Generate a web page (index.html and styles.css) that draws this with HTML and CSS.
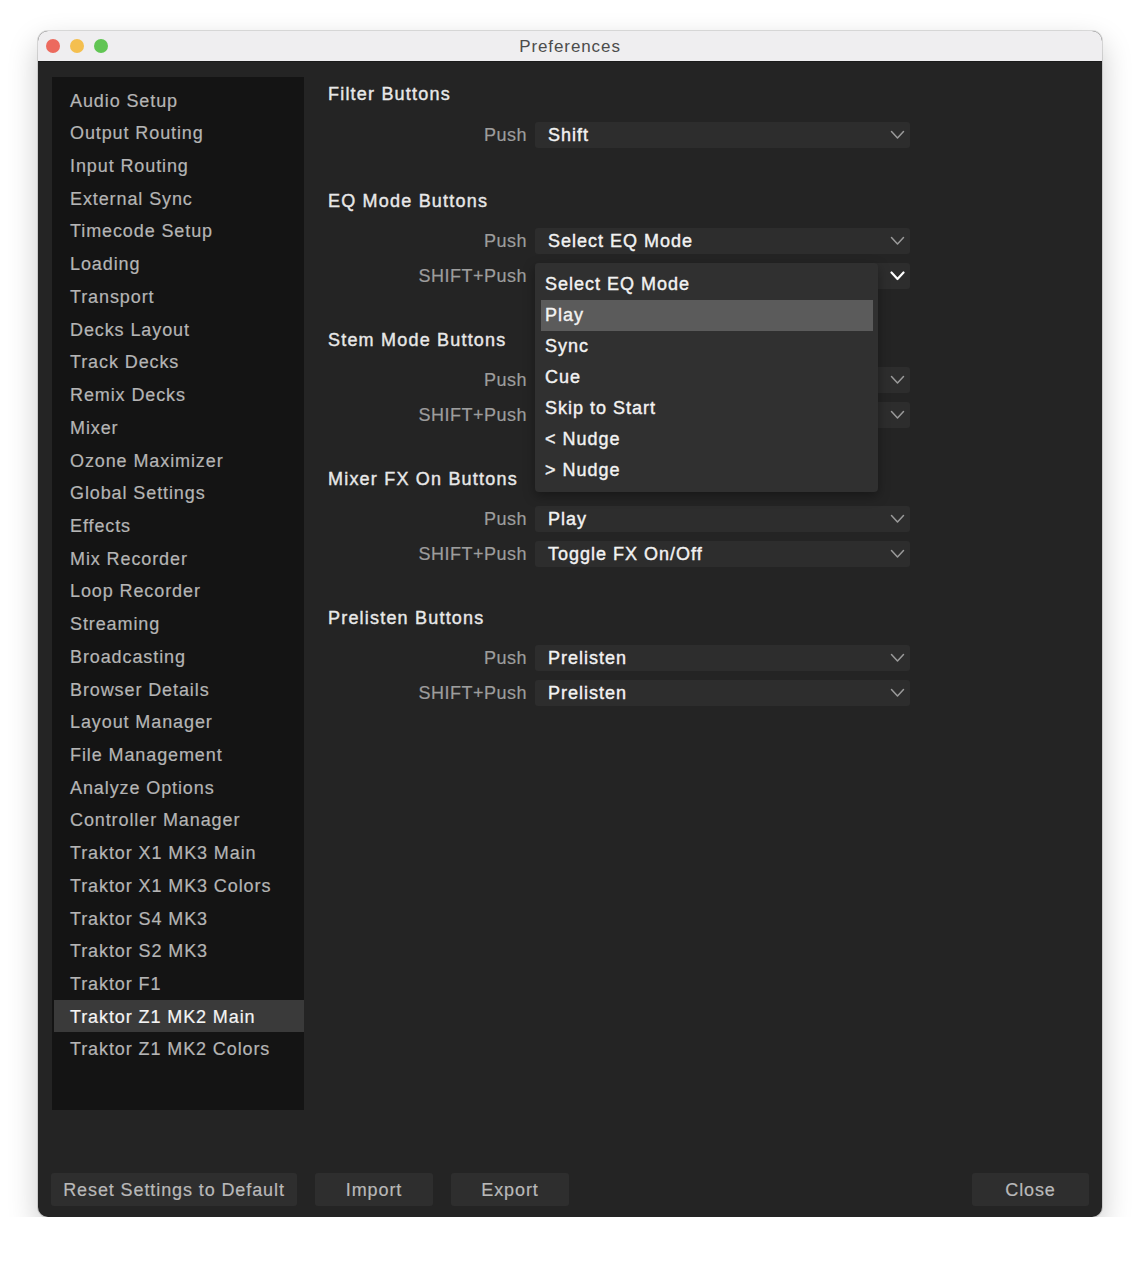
FILE: index.html
```html
<!DOCTYPE html>
<html lang="en">
<head>
<meta charset="utf-8">
<title>Preferences</title>
<link rel="stylesheet" href="styles.css">
</head>
<body>
<div class="window">
  <div class="titlebar">
    <div class="lights">
      <span class="light red"></span>
      <span class="light yellow"></span>
      <span class="light green"></span>
    </div>
    <div class="title">Preferences</div>
  </div>
  <div class="window-body">
    <div class="main">
      <nav class="sidebar">
        <div class="nav-item">Audio Setup</div>
        <div class="nav-item">Output Routing</div>
        <div class="nav-item">Input Routing</div>
        <div class="nav-item">External Sync</div>
        <div class="nav-item">Timecode Setup</div>
        <div class="nav-item">Loading</div>
        <div class="nav-item">Transport</div>
        <div class="nav-item">Decks Layout</div>
        <div class="nav-item">Track Decks</div>
        <div class="nav-item">Remix Decks</div>
        <div class="nav-item">Mixer</div>
        <div class="nav-item">Ozone Maximizer</div>
        <div class="nav-item">Global Settings</div>
        <div class="nav-item">Effects</div>
        <div class="nav-item">Mix Recorder</div>
        <div class="nav-item">Loop Recorder</div>
        <div class="nav-item">Streaming</div>
        <div class="nav-item">Broadcasting</div>
        <div class="nav-item">Browser Details</div>
        <div class="nav-item">Layout Manager</div>
        <div class="nav-item">File Management</div>
        <div class="nav-item">Analyze Options</div>
        <div class="nav-item">Controller Manager</div>
        <div class="nav-item">Traktor X1 MK3 Main</div>
        <div class="nav-item">Traktor X1 MK3 Colors</div>
        <div class="nav-item">Traktor S4 MK3</div>
        <div class="nav-item">Traktor S2 MK3</div>
        <div class="nav-item">Traktor F1</div>
        <div class="nav-item selected">Traktor Z1 MK2 Main</div>
        <div class="nav-item">Traktor Z1 MK2 Colors</div>
      </nav>

      <div class="content">
        <section class="group">
          <h2 class="group-title">Filter Buttons</h2>
          <div class="rows">
            <div class="row">
              <span class="label">Push</span>
              <div class="select"><span class="value">Shift</span><svg class="chev" viewBox="0 0 15 10" width="15" height="10"><polyline points="1.5,1.5 7.5,8 13.5,1.5"/></svg></div>
            </div>
          </div>
        </section>

        <section class="group">
          <h2 class="group-title">EQ Mode Buttons</h2>
          <div class="rows">
            <div class="row">
              <span class="label">Push</span>
              <div class="select"><span class="value">Select EQ Mode</span><svg class="chev" viewBox="0 0 15 10" width="15" height="10"><polyline points="1.5,1.5 7.5,8 13.5,1.5"/></svg></div>
            </div>
            <div class="row">
              <span class="label">SHIFT+Push</span>
              <div class="select open">
                <span class="value"></span><svg class="chev" viewBox="0 0 15 10" width="15" height="10"><polyline points="1.5,1.5 7.5,8 13.5,1.5"/></svg>
                <ul class="menu">
                  <li class="menu-item">Select EQ Mode</li>
                  <li class="menu-item active">Play</li>
                  <li class="menu-item">Sync</li>
                  <li class="menu-item">Cue</li>
                  <li class="menu-item">Skip to Start</li>
                  <li class="menu-item">&lt; Nudge</li>
                  <li class="menu-item">&gt; Nudge</li>
                </ul>
              </div>
            </div>
          </div>
        </section>

        <section class="group">
          <h2 class="group-title">Stem Mode Buttons</h2>
          <div class="rows">
            <div class="row">
              <span class="label">Push</span>
              <div class="select"><span class="value"></span><svg class="chev" viewBox="0 0 15 10" width="15" height="10"><polyline points="1.5,1.5 7.5,8 13.5,1.5"/></svg></div>
            </div>
            <div class="row">
              <span class="label">SHIFT+Push</span>
              <div class="select"><span class="value"></span><svg class="chev" viewBox="0 0 15 10" width="15" height="10"><polyline points="1.5,1.5 7.5,8 13.5,1.5"/></svg></div>
            </div>
          </div>
        </section>

        <section class="group">
          <h2 class="group-title">Mixer FX On Buttons</h2>
          <div class="rows">
            <div class="row">
              <span class="label">Push</span>
              <div class="select"><span class="value">Play</span><svg class="chev" viewBox="0 0 15 10" width="15" height="10"><polyline points="1.5,1.5 7.5,8 13.5,1.5"/></svg></div>
            </div>
            <div class="row">
              <span class="label">SHIFT+Push</span>
              <div class="select"><span class="value">Toggle FX On/Off</span><svg class="chev" viewBox="0 0 15 10" width="15" height="10"><polyline points="1.5,1.5 7.5,8 13.5,1.5"/></svg></div>
            </div>
          </div>
        </section>

        <section class="group">
          <h2 class="group-title">Prelisten Buttons</h2>
          <div class="rows">
            <div class="row">
              <span class="label">Push</span>
              <div class="select"><span class="value">Prelisten</span><svg class="chev" viewBox="0 0 15 10" width="15" height="10"><polyline points="1.5,1.5 7.5,8 13.5,1.5"/></svg></div>
            </div>
            <div class="row">
              <span class="label">SHIFT+Push</span>
              <div class="select"><span class="value">Prelisten</span><svg class="chev" viewBox="0 0 15 10" width="15" height="10"><polyline points="1.5,1.5 7.5,8 13.5,1.5"/></svg></div>
            </div>
          </div>
        </section>
      </div>
    </div>

    <div class="footer">
      <button class="btn btn-reset">Reset Settings to Default</button>
      <button class="btn btn-small">Import</button>
      <button class="btn btn-small">Export</button>
      <button class="btn btn-close">Close</button>
    </div>
  </div>
</div>
</body>
</html>
```

FILE: styles.css
```css
* {
  box-sizing: border-box;
}

html, body {
  margin: 0;
  padding: 0;
  background: #ffffff;
}

body {
  font-family: "Liberation Sans", Arial, sans-serif;
  font-size: 18px;
  letter-spacing: 0.9px;
}

/* ---- window frame ---- */
.window {
  margin: 31px 0 0 38px;
  width: 1064px;
  height: 1186px;
  border-radius: 10px;
  overflow: hidden;
  background: #242424;
  box-shadow: 0 0 0 1px rgba(0, 0, 0, 0.12), 0 12px 30px rgba(0, 0, 0, 0.22);
  display: flex;
  flex-direction: column;
}

.titlebar {
  position: relative;
  height: 31px;
  flex: none;
  background: #efeef0;
  border-bottom: 1px solid #1a1a1a;
  display: flex;
  align-items: center;
  justify-content: center;
  padding-top: 2px;
}

.lights {
  position: absolute;
  left: 8px;
  top: 8px;
  display: flex;
  gap: 10px;
}

.light {
  width: 14px;
  height: 14px;
  border-radius: 50%;
}

.red { background: #ec6a5e; }
.yellow { background: #f4bf4f; }
.green { background: #61c554; }

.title {
  color: #4c4c4c;
  font-size: 17px;
  letter-spacing: 0.9px;
}

/* ---- body ---- */
.window-body {
  flex: 1;
  display: flex;
  flex-direction: column;
  padding: 15px 13px 11px 13px;
}

.main {
  display: flex;
  height: 1033px;
}

.sidebar {
  width: 252px;
  margin-left: 1px;
  background: #141414;
  padding-top: 6.6px;
  flex: none;
}

.nav-item {
  height: 32.72px;
  line-height: 32.72px;
  padding-top: 1px;
  margin-left: 2px;
  padding-left: 16px;
  color: #b5b5b5;
  white-space: nowrap;
  -webkit-text-stroke: 0.2px currentColor;
}

.nav-item.selected {
  background: #3a3a3a;
  color: #f4f4f4;
}

/* ---- settings panel ---- */
.content {
  flex: 1;
  padding: 5px 0 0 24px;
}

.group + .group {
  margin-top: 39px;
}

.group:nth-child(2) {
  margin-top: 41px;
}

.group-title {
  margin: 0;
  height: 24px;
  line-height: 24px;
  font-size: 18px;
  font-weight: normal;
  letter-spacing: 1.2px;
  color: #e8e8e8;
  -webkit-text-stroke: 0.4px currentColor;
}

.rows {
  margin-top: 15px;
  display: flex;
  flex-direction: column;
  gap: 9px;
}

.group:first-child .rows {
  margin-top: 16px;
}

.row {
  display: flex;
  align-items: center;
  gap: 8px;
  height: 26px;
}

.label {
  width: 199px;
  text-align: right;
  color: #9d9d9d;
  letter-spacing: 0.5px;
  white-space: nowrap;
  -webkit-text-stroke: 0.2px currentColor;
}

.select {
  position: relative;
  width: 375px;
  height: 26px;
  background: #2d2d2d;
  border-radius: 3px;
  display: flex;
  align-items: center;
  justify-content: space-between;
  padding: 0 5px 0 13px;
}

.value {
  color: #f2f2f2;
  letter-spacing: 1px;
  white-space: nowrap;
  -webkit-text-stroke: 0.4px currentColor;
}

.chev {
  flex: none;
}

.chev polyline {
  fill: none;
  stroke: #9a9a9a;
  stroke-width: 1.5;
  stroke-linecap: round;
  stroke-linejoin: round;
}

.select.open .chev polyline {
  stroke: #ffffff;
  stroke-width: 2.2;
}

/* ---- popup list of the open dropdown ---- */
.menu {
  position: absolute;
  left: 0;
  top: 0;
  width: 343px;
  margin: 0;
  padding: 5.5px 5px 6.5px 6px;
  list-style: none;
  background: #303030;
  border-radius: 4px;
  box-shadow: 0 4px 12px rgba(0, 0, 0, 0.35);
  z-index: 5;
}

.menu-item {
  height: 31px;
  line-height: 31px;
  padding-left: 4px;
  color: #f2f2f2;
  letter-spacing: 1px;
  white-space: nowrap;
  -webkit-text-stroke: 0.4px currentColor;
}

.menu-item.active {
  background: #5b5b5b;
}

/* ---- footer buttons ---- */
.footer {
  margin-top: auto;
  display: flex;
  gap: 18px;
}

.btn {
  height: 33px;
  border: none;
  border-radius: 3px;
  background: #2e2e2e;
  color: #b9b9b9;
  font-family: inherit;
  font-size: 18px;
  letter-spacing: 0.9px;
  padding: 1px 0 0;
  -webkit-text-stroke: 0.2px currentColor;
}

.btn-reset { width: 246px; }
.btn-small { width: 118px; }
.btn-close { width: 117px; margin-left: auto; }
```
